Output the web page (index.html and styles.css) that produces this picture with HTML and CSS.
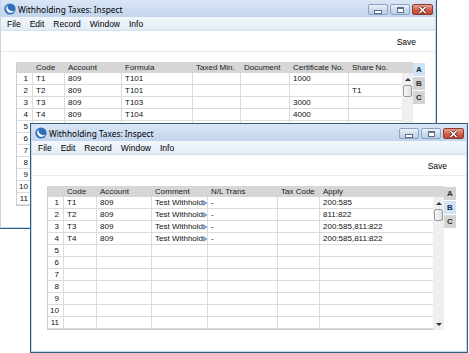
FILE: index.html
```html
<!DOCTYPE html>
<html lang="en">
<head>
  <meta charset="UTF-8" />
  <title>Withholding Taxes: Inspect</title>
  <link rel="stylesheet" href="styles.css">
</head>
<body>
<div class="desktop">

  <!-- back window -->
  <div class="window win-back">
    <div class="titlebar">
      <svg class="app-icon" width="12" height="12" viewBox="0 0 12 12">
        <circle cx="6" cy="6" r="5.6" fill="#2f6fc0"/>
        <path d="M3.6 2.2 A4.4 4.4 0 1 0 10.4 7.6 A4.8 4.8 0 0 1 3.6 2.2Z" fill="#fff"/>
      </svg>
      <span class="title">Withholding Taxes: Inspect</span>
      <div class="controls">
        <span class="ctl ctl-min"></span>
        <span class="ctl ctl-max"></span>
        <span class="ctl ctl-close">
          <svg width="9" height="8" viewBox="0 0 9 8"><path d="M1.5 1 L7.5 7 M7.5 1 L1.5 7" stroke="#5a2118" stroke-width="3"/><path d="M1.5 1 L7.5 7 M7.5 1 L1.5 7" stroke="#fff" stroke-width="1.6"/></svg>
        </span>
      </div>
    </div>
    <div class="menubar">
      <span>File</span><span>Edit</span><span>Record</span><span>Window</span><span>Info</span>
    </div>
    <div class="body">
      <div class="toolbar"><span class="save">Save</span></div>
      <div class="matrix">
        <div class="grid cols-a">
          <div class="row head"><span></span><span>Code</span><span>Account</span><span>Formula</span><span>Taxed Min.</span><span>Document</span><span>Certificate No.</span><span>Share No.</span></div>
          <div class="row"><span class="num">1</span><span>T1</span><span>809</span><span>T101</span><span></span><span></span><span>1000</span><span></span></div>
          <div class="row"><span class="num">2</span><span>T2</span><span>809</span><span>T101</span><span></span><span></span><span></span><span>T1</span></div>
          <div class="row"><span class="num">3</span><span>T3</span><span>809</span><span>T103</span><span></span><span></span><span>3000</span><span></span></div>
          <div class="row"><span class="num">4</span><span>T4</span><span>809</span><span>T104</span><span></span><span></span><span>4000</span><span></span></div>
          <div class="row"><span class="num">5</span><span></span><span></span><span></span><span></span><span></span><span></span><span></span></div>
          <div class="row"><span class="num">6</span><span></span><span></span><span></span><span></span><span></span><span></span><span></span></div>
          <div class="row"><span class="num">7</span><span></span><span></span><span></span><span></span><span></span><span></span><span></span></div>
          <div class="row"><span class="num">8</span><span></span><span></span><span></span><span></span><span></span><span></span><span></span></div>
          <div class="row"><span class="num">9</span><span></span><span></span><span></span><span></span><span></span><span></span><span></span></div>
          <div class="row"><span class="num">10</span><span></span><span></span><span></span><span></span><span></span><span></span><span></span></div>
          <div class="row"><span class="num">11</span><span></span><span></span><span></span><span></span><span></span><span></span><span></span></div>
        </div>
        <div class="scroll">
          <div class="scroll-head"></div>
          <div class="track">
            <span class="arrow-up"></span>
            <span class="thumb"></span>
            <span class="fill"></span>
            <span class="arrow-down"></span>
          </div>
        </div>
        <div class="tabs">
          <span class="tab on">A</span>
          <span class="tab">B</span>
          <span class="tab">C</span>
        </div>
      </div>
    </div>
  </div>

  <!-- front window -->
  <div class="window win-front">
    <div class="titlebar">
      <svg class="app-icon" width="12" height="12" viewBox="0 0 12 12">
        <circle cx="6" cy="6" r="5.6" fill="#2f6fc0"/>
        <path d="M3.6 2.2 A4.4 4.4 0 1 0 10.4 7.6 A4.8 4.8 0 0 1 3.6 2.2Z" fill="#fff"/>
      </svg>
      <span class="title">Withholding Taxes: Inspect</span>
      <div class="controls">
        <span class="ctl ctl-min"></span>
        <span class="ctl ctl-max"></span>
        <span class="ctl ctl-close">
          <svg width="9" height="8" viewBox="0 0 9 8"><path d="M1.5 1 L7.5 7 M7.5 1 L1.5 7" stroke="#5a2118" stroke-width="3"/><path d="M1.5 1 L7.5 7 M7.5 1 L1.5 7" stroke="#fff" stroke-width="1.6"/></svg>
        </span>
      </div>
    </div>
    <div class="menubar">
      <span>File</span><span>Edit</span><span>Record</span><span>Window</span><span>Info</span>
    </div>
    <div class="body">
      <div class="toolbar"><span class="save">Save</span></div>
      <div class="matrix">
        <div class="grid cols-b">
          <div class="row head"><span></span><span>Code</span><span>Account</span><span>Comment</span><span>N/L Trans</span><span>Tax Code</span><span>Apply</span></div>
          <div class="row"><span class="num">1</span><span>T1</span><span>809</span><span class="link"><i>Test Withhold</i></span><span>-</span><span></span><span>200:585</span></div>
          <div class="row"><span class="num">2</span><span>T2</span><span>809</span><span class="link"><i>Test Withhold</i></span><span>-</span><span></span><span>811:822</span></div>
          <div class="row"><span class="num">3</span><span>T3</span><span>809</span><span class="link"><i>Test Withhold</i></span><span>-</span><span></span><span>200:585,811:822</span></div>
          <div class="row"><span class="num">4</span><span>T4</span><span>809</span><span class="link"><i>Test Withhold</i></span><span>-</span><span></span><span>200:585,811:822</span></div>
          <div class="row"><span class="num">5</span><span></span><span></span><span></span><span></span><span></span><span></span></div>
          <div class="row"><span class="num">6</span><span></span><span></span><span></span><span></span><span></span><span></span></div>
          <div class="row"><span class="num">7</span><span></span><span></span><span></span><span></span><span></span><span></span></div>
          <div class="row"><span class="num">8</span><span></span><span></span><span></span><span></span><span></span><span></span></div>
          <div class="row"><span class="num">9</span><span></span><span></span><span></span><span></span><span></span><span></span></div>
          <div class="row"><span class="num">10</span><span></span><span></span><span></span><span></span><span></span><span></span></div>
          <div class="row"><span class="num">11</span><span></span><span></span><span></span><span></span><span></span><span></span></div>
        </div>
        <div class="scroll">
          <div class="scroll-head"></div>
          <div class="track">
            <span class="arrow-up"></span>
            <span class="thumb"></span>
            <span class="fill"></span>
            <span class="arrow-down"></span>
          </div>
        </div>
        <div class="tabs">
          <span class="tab">A</span>
          <span class="tab on">B</span>
          <span class="tab">C</span>
        </div>
      </div>
    </div>
  </div>

</div>
</body>
</html>
```

FILE: styles.css
```css
body {
  margin: 0;
  background: #fff;
  font-family: 'Liberation Sans', Arial, sans-serif;
  color: #111;
}
.desktop {
  position: relative;
  width: 469px;
  height: 353px;
  overflow: hidden;
}

/* Windows */
.window {
  position: absolute;
  width: 438px;
  height: 230px;
  box-sizing: border-box;
  border: 1px solid #2d5f7e;
  background: #c3d6ec;
  padding: 0 1px 1px;
  display: flex;
  flex-direction: column;
}
.win-back {
  left: -1px;
  top: -1px;
}
.win-front {
  left: 30px;
  top: 123px;
}

.titlebar {
  height: 17px;
  flex: none;
  display: flex;
  align-items: center;
  padding: 0 2px 0 3px;
  background: linear-gradient(#dae6f5, #c2d5ec);
}
.app-icon {
  flex: none;
  margin-top: 1px;
}
.title {
  font-family: 'Noto Sans', 'Open Sans', sans-serif;
  font-size: 8.3px;
  color: #000;
  margin-left: 2px;
  margin-top: 2px;
}
.controls {
  margin-left: auto;
  display: flex;
  gap: 2px;
  align-self: flex-start;
  margin-top: 4px;
}
.ctl {
  width: 20px;
  height: 11px;
  box-sizing: border-box;
  border: 1px solid #8aa3c2;
  border-radius: 2px;
  background: linear-gradient(#eef3fa, #cbdaed 55%, #bccfe7);
  display: flex;
  align-items: center;
  justify-content: center;
}
.ctl-min::after {
  content: "";
  width: 6px;
  height: 2px;
  background: #fff;
  border: 1px solid #5c6f88;
  margin-top: 4px;
}
.ctl-max::after {
  content: "";
  width: 5px;
  height: 3px;
  border: 1px solid #5c6f88;
  border-top-width: 2px;
  background: #fff;
}
.ctl-close {
  width: 21px;
  border-color: #8c3b2e;
  background: linear-gradient(#eaa394, #d0604c 55%, #c14632);
}

.menubar {
  height: 14px;
  flex: none;
  display: flex;
  gap: 9px;
  align-items: center;
  padding-left: 6px;
  font-size: 8.5px;
  color: #000;
  background: linear-gradient(#f3f7fc, #e2ebf6);
  border-bottom: 1px solid #d6e1ee;
  box-sizing: border-box;
}

.body {
  flex: 1;
  background: #fff;
}
.toolbar {
  height: 21px;
  box-sizing: border-box;
  padding: 6px 19px 0 0;
  border-bottom: 1px solid #ececec;
  text-align: right;
  font-size: 8.5px;
  line-height: 11px;
  color: #000;
}

/* Matrix */
.matrix {
  display: flex;
  align-items: flex-start;
  margin: 10px 0 0 15px;
  font-size: 8px;
}
.grid {
  width: 386px;
  box-sizing: border-box;
  border-left: 1px solid #cdcdcd;
  border-bottom: 1px solid #c9c9c9;
}
.row {
  display: grid;
  height: 12px;
  box-sizing: border-box;
  border-bottom: 1px solid #dcdcdc;
}
.cols-a .row {
  grid-template-columns: 16px 32px 57px 71px 48px 49px 59px 53px;
}
.cols-b .row {
  grid-template-columns: 16px 33px 55px 56px 70px 42px 113px;
}
.row > span {
  border-right: 1px solid #dcdcdc;
  padding-left: 3px;
  line-height: 11px;
  white-space: nowrap;
  overflow: hidden;
}
.row > span:last-child {
  border-right: none;
}
.row.head {
  height: 11px;
  background: #d6d6d6;
  border-bottom: none;
  color: #222;
}
.row.head > span {
  border-right-color: transparent;
  line-height: 11px;
}
.row > .num {
  padding: 0 4px 0 0;
  text-align: right;
}
.row > .link {
  display: flex;
  align-items: center;
  justify-content: space-between;
}
.link i {
  font-style: normal;
}
.link::after {
  content: "";
  flex: none;
  border-left: 5px solid #86a3cf;
  border-top: 3px solid transparent;
  border-bottom: 3px solid transparent;
  margin-right: 1px;
}

/* Scrollbar */
.scroll {
  width: 11px;
}
.scroll-head {
  height: 11px;
  background: #d6d6d6;
}
.track {
  height: 133px;
  background: #efefef;
  display: flex;
  flex-direction: column;
  align-items: center;
}
.arrow-up,
.arrow-down {
  height: 12px;
  display: flex;
  align-items: center;
}
.arrow-up::after {
  content: "";
  border-bottom: 3px solid #333;
  border-left: 3px solid transparent;
  border-right: 3px solid transparent;
}
.arrow-down::after {
  content: "";
  border-top: 3px solid #333;
  border-left: 3px solid transparent;
  border-right: 3px solid transparent;
}
.thumb {
  width: 9px;
  height: 12px;
  box-sizing: border-box;
  border: 1px solid #9a9a9a;
  border-radius: 2px;
  background: linear-gradient(90deg, #f7f7f7, #dedede);
}
.fill {
  flex: 1;
}

/* Tabs */
.tabs {
  display: flex;
  flex-direction: column;
  gap: 1px;
  padding-top: 1px;
}
.tab {
  width: 12px;
  height: 13px;
  line-height: 13px;
  text-align: center;
  background: #d4d4d4;
  font-weight: bold;
  font-size: 8px;
  color: #2d2d2d;
}
.tab.on {
  background: #cfe3f9;
  color: #1e2b44;
}
```
